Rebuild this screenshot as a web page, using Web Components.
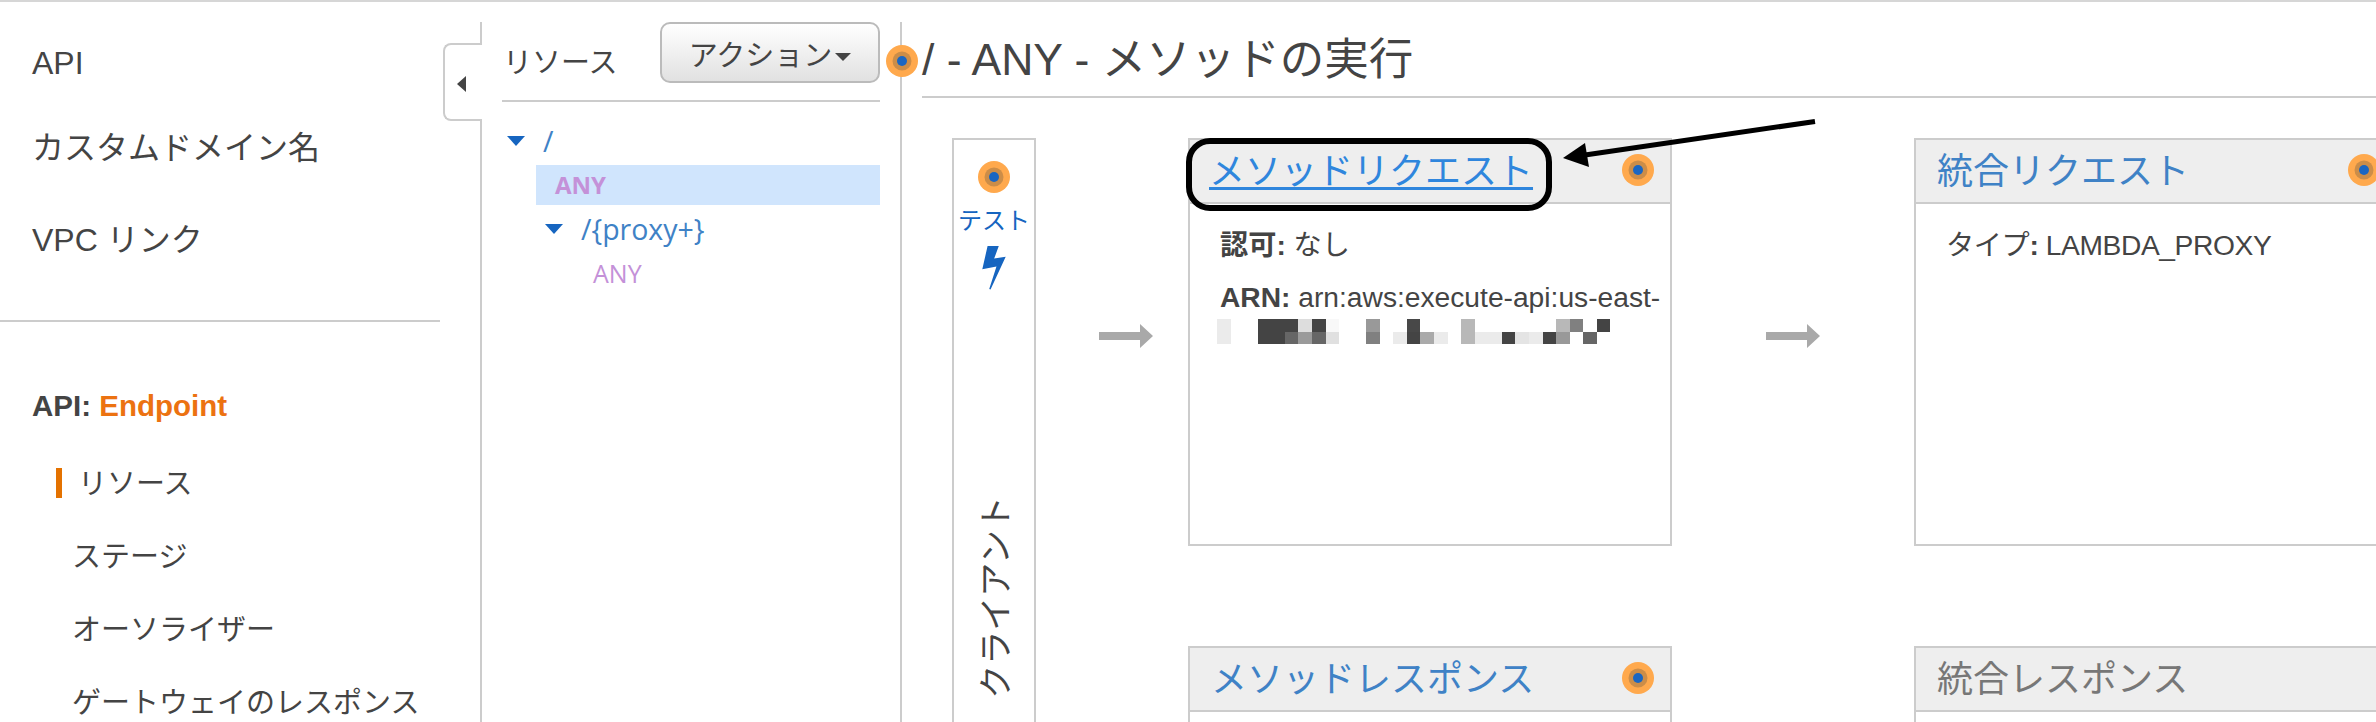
<!DOCTYPE html>
<html lang="ja">
<head>
<meta charset="utf-8">
<style>
  html, body { margin: 0; height: 722px; overflow: hidden; background: #fff; }
  body { font-family: "Liberation Sans", "Noto Sans CJK JP", sans-serif; color: #444; }
</style>
</head>
<body>
<console-shell>
  <api-sidebar slot="nav"></api-sidebar>
  <resource-panel slot="tree"></resource-panel>
  <method-execution slot="main">
    <client-box slot="client"></client-box>
    <flow-arrow slot="arrow1"></flow-arrow>
    <method-card slot="req" highlight pulse link heading="メソッドリクエスト">
      <p class="line"><b>認可:</b> なし</p>
      <p class="line arn"><b>ARN:</b> arn:aws:execute-api:us-east-</p>
      <pixel-block></pixel-block>
    </method-card>
    <flow-arrow slot="arrow2"></flow-arrow>
    <method-card slot="integ" pulse heading="統合リクエスト">
      <p class="line tight">タイプ<b>:</b> LAMBDA_PROXY</p>
    </method-card>
    <method-card slot="res" pulse heading="メソッドレスポンス"></method-card>
    <method-card slot="integres" muted heading="統合レスポンス"></method-card>
  </method-execution>
</console-shell>

<script>
const FONT = '"Liberation Sans", "Noto Sans CJK JP", sans-serif';

class PulseDot extends HTMLElement {
  constructor() {
    super();
    this.attachShadow({ mode: 'open' });
    this.shadowRoot.innerHTML = `
      <style>
        :host { display: block; width: 32px; height: 32px; }
        svg { display: block; }
      </style>
      <svg width="32" height="32" viewBox="0 0 32 32">
        <circle cx="16" cy="16" r="16" fill="#ffa94d"/>
        <circle cx="16" cy="16" r="9.5" fill="#cc8d48"/>
        <circle cx="16" cy="16" r="5" fill="#1a66c2"/>
      </svg>`;
  }
}
customElements.define('pulse-dot', PulseDot);

class ConsoleShell extends HTMLElement {
  constructor() {
    super();
    this.attachShadow({ mode: 'open' });
    this.shadowRoot.innerHTML = `
      <style>
        :host {
          display: flex;
          width: 2376px;
          height: 720px;
          border-top: 2px solid #d6d6d6;
          overflow: hidden;
        }
      </style>
      <slot name="nav"></slot>
      <slot name="tree"></slot>
      <slot name="main"></slot>`;
  }
}
customElements.define('console-shell', ConsoleShell);

class ApiSidebar extends HTMLElement {
  constructor() {
    super();
    this.attachShadow({ mode: 'open' });
    this.shadowRoot.innerHTML = `
      <style>
        :host {
          display: block;
          flex: none;
          width: 480px;
          font-size: 32px;
          color: #444;
        }
        .row { height: 40px; line-height: 40px; padding-left: 32px; white-space: nowrap; }
        hr { height: 2px; border: 0; margin: 60px 40px 0 0; background: #ccc; }
        .head { font-size: 29.5px; font-weight: 700; margin-top: 64px; }
        .head span { color: #ec7211; }
        .sub { font-size: 29px; padding-left: 72px; margin-top: 33px; }
        .sub.on { display: flex; align-items: center; padding-left: 56px; margin-top: 38px; }
        .sub.on i { width: 6px; height: 30px; background: #e47200; margin: -2px 16px 0 0; }
      </style>
      <div class="row" style="margin-top:41px">API</div>
      <div class="row" style="margin-top:45px">カスタムドメイン名</div>
      <div class="row" style="margin-top:52px">VPC リンク</div>
      <hr>
      <div class="row head">API: <span>Endpoint</span></div>
      <div class="row sub on"><i></i>リソース</div>
      <div class="row sub" style="margin-top:33px">ステージ</div>
      <div class="row sub">オーソライザー</div>
      <div class="row sub">ゲートウェイのレスポンス</div>`;
  }
}
customElements.define('api-sidebar', ApiSidebar);

class ResourcePanel extends HTMLElement {
  constructor() {
    super();
    this.attachShadow({ mode: 'open' });
    this.shadowRoot.innerHTML = `
      <style>
        :host {
          display: block;
          position: relative;
          flex: none;
          box-sizing: border-box;
          width: 422px;
          margin-top: 20px;
          padding: 0 20px;
          border-left: 2px solid #ccc;
          border-right: 2px solid #ccc;
          font-family: ${FONT};
        }
        .tab {
          position: absolute;
          left: -39px;
          top: 21px;
          box-sizing: border-box;
          width: 39px;
          height: 78px;
          background: #fff;
          border: 2px solid #ccc;
          border-right: 0;
          border-radius: 8px 0 0 8px;
        }
        .tab::before {
          content: "";
          position: absolute;
          right: -2px;
          top: 0;
          width: 2px;
          height: 74px;
          background: #fff;
        }
        .tab::after {
          content: "";
          position: absolute;
          left: 12px;
          top: 31px;
          border: 8px solid transparent;
          border-left: 0;
          border-right: 9px solid #444;
        }
        .head {
          display: flex;
          justify-content: space-between;
          height: 78px;
          border-bottom: 2px solid #ccc;
          font-size: 29px;
        }
        .head span { line-height: 82px; padding-left: 1px; }
        button {
          box-sizing: border-box;
          width: 220px;
          height: 61px;
          padding: 0;
          border: 2px solid #bbb;
          border-radius: 10px;
          background: linear-gradient(#fff, #e1e1e1);
          font: 29px ${FONT};
          color: #444;
          white-space: nowrap;
        }
        button i {
          display: inline-block;
          margin-left: 3px;
          vertical-align: 5px;
          border: 8px solid transparent;
          border-top: 8px solid #444;
          border-bottom: 0;
        }
        pulse-dot { position: absolute; right: -18px; top: 23px; }
        .tree { margin-top: 15px; font-family: "Open Sans", "Noto Sans CJK JP", sans-serif; }
        .node { display: flex; align-items: center; height: 48px; color: #3f82c6; font-size: 28.5px; }
        .node i {
          flex: none;
          width: 0;
          height: 0;
          margin: 0 18px 0 5px;
          border-left: 9px solid transparent;
          border-right: 9px solid transparent;
          border-top: 10px solid #1665c0;
        }
        .node.two { margin-left: 38px; }
        .verb { color: #c491d8; }
        .sel {
          margin: 0 0 0 34px;
          padding-left: 19px;
          height: 40px;
          line-height: 40px;
          background: #d0e5fd;
          font-size: 24px;
          font-weight: 700;
        }
        .leaf { margin-left: 91px; height: 40px; line-height: 40px; font-size: 25px; }
      </style>
      <div class="tab"></div>
      <div class="head"><span>リソース</span><button>アクション<i></i></button></div>
      <pulse-dot></pulse-dot>
      <div class="tree">
        <div class="node"><i></i>/</div>
        <div class="verb sel">ANY</div>
        <div class="node two"><i></i>/{proxy+}</div>
        <div class="verb leaf">ANY</div>
      </div>`;
  }
}
customElements.define('resource-panel', ResourcePanel);

class MethodExecution extends HTMLElement {
  constructor() {
    super();
    this.attachShadow({ mode: 'open' });
    this.shadowRoot.innerHTML = `
      <style>
        :host {
          display: block;
          position: relative;
          flex: 1;
          min-width: 0;
          padding-left: 20px;
        }
        h1 {
          margin: 0;
          height: 94px;
          border-bottom: 2px solid #ccc;
          font-size: 44.5px;
          font-weight: 400;
          line-height: 116px;
          white-space: nowrap;
          color: #444;
        }
        .grid {
          display: grid;
          grid-template-columns: 84px 152px 484px 242px 484px;
          grid-template-rows: 408px 408px;
          row-gap: 100px;
          margin: 40px 0 0 30px;
        }
        ::slotted([slot="client"]) { grid-column: 1; grid-row: 1 / 3; }
        ::slotted([slot="arrow1"]) { grid-column: 2; grid-row: 1; padding-left: 28px; }
        ::slotted([slot="req"]) { grid-column: 3; grid-row: 1; }
        ::slotted([slot="arrow2"]) { grid-column: 4; grid-row: 1; }
        ::slotted([slot="integ"]) { grid-column: 5; grid-row: 1; }
        ::slotted([slot="res"]) { grid-column: 3; grid-row: 2; }
        ::slotted([slot="integres"]) { grid-column: 5; grid-row: 2; }
        .note { position: absolute; left: 0; top: 0; pointer-events: none; }
      </style>
      <h1>/ - ANY - メソッドの実行</h1>
      <div class="grid">
        <slot name="client"></slot>
        <slot name="arrow1"></slot>
        <slot name="req"></slot>
        <slot name="arrow2"></slot>
        <slot name="integ"></slot>
        <slot name="res"></slot>
        <slot name="integres"></slot>
      </div>
      <svg class="note" width="1000" height="200" viewBox="902 2 1000 200">
        <line x1="1815" y1="121.5" x2="1585" y2="155" stroke="#000" stroke-width="5"/>
        <polygon points="1563,158 1585,143 1589,167" fill="#000"/>
      </svg>`;
  }
}
customElements.define('method-execution', MethodExecution);

class ClientBox extends HTMLElement {
  constructor() {
    super();
    this.attachShadow({ mode: 'open' });
    this.shadowRoot.innerHTML = `
      <style>
        :host {
          display: flex;
          flex-direction: column;
          align-items: center;
          box-sizing: border-box;
          height: 640px;
          padding-top: 21px;
          border: 2px solid #ccc;
        }
        .test { margin-top: 10px; font-size: 24px; line-height: 36px; color: #1665c0; }
        svg { display: block; margin-top: 5px; }
        .name {
          margin: 205px 0 0 4px;
          writing-mode: vertical-rl;
          text-orientation: sideways;
          transform: rotate(180deg);
          font-size: 34px;
          line-height: 40px;
          color: #444;
        }
      </style>
      <pulse-dot></pulse-dot>
      <div class="test">テスト</div>
      <svg width="28" height="47" viewBox="120 315 85 140">
        <polygon points="143,320 177,320 163,358 198,352 152,452 148,450 170,382 127,390" fill="#1665c0"/>
      </svg>
      <div class="name">クライアント</div>`;
  }
}
customElements.define('client-box', ClientBox);

class FlowArrow extends HTMLElement {
  constructor() {
    super();
    this.attachShadow({ mode: 'open' });
    this.shadowRoot.innerHTML = `
      <style>
        :host { display: flex; justify-content: center; align-items: flex-start; padding-top: 186px; }
        svg { display: block; }
      </style>
      <svg width="54" height="24" viewBox="0 0 54 24">
        <polygon points="0,8 41,8 41,0 54,12 41,24 41,16 0,16" fill="#a9a9a9"/>
      </svg>`;
  }
}
customElements.define('flow-arrow', FlowArrow);

class MethodCard extends HTMLElement {
  constructor() {
    super();
    this.attachShadow({ mode: 'open' });
    const heading = this.getAttribute('heading') || '';
    const dot = this.hasAttribute('pulse') ? '<pulse-dot></pulse-dot>' : '';
    const mark = this.hasAttribute('highlight') ? '<div class="mark"></div>' : '';
    const title = this.hasAttribute('link') ? `<a>${heading}</a>` : `<span>${heading}</span>`;
    this.shadowRoot.innerHTML = `
      <style>
        :host {
          display: block;
          position: relative;
          box-sizing: border-box;
          border: 2px solid #ccc;
          font-size: 28.2px;
          color: #444;
        }
        header {
          display: flex;
          justify-content: space-between;
          align-items: center;
          box-sizing: border-box;
          height: 64px;
          padding: 0 16px 2px 21px;
          background: #eee;
          border-bottom: 2px solid #ccc;
          font-size: 36px;
          white-space: nowrap;
          color: #3f82c6;
        }
        header a, header span { margin-bottom: 5px; }
        :host([muted]) header { color: #777; }
        a { margin-left: -2px; color: #2f86dd; text-decoration: underline; text-decoration-thickness: 3px; text-underline-offset: 3px; }
        .mark {
          position: absolute;
          left: -4px;
          top: -2px;
          box-sizing: border-box;
          width: 366px;
          height: 73px;
          border: 6px solid #000;
          border-radius: 24px;
        }
        .body { padding: 21px 0 0 30px; }
        ::slotted(.line) { margin: 0; height: 40px; line-height: 40px; white-space: nowrap; }
        ::slotted(.arn) { margin-top: 12px; }
        ::slotted(.tight) { letter-spacing: -0.4px; }
      </style>
      <header>${title}${dot}</header>
      ${mark}
      <div class="body"><slot></slot></div>`;
  }
}
customElements.define('method-card', MethodCard);

// the redacted part of the ARN, column by column: [top, bottom]
const PIXELS = [
  ['#ebebeb', '#ebebeb'], null, null,
  ['#444', '#444'], ['#444', '#444'], ['#444', '#666'], ['#ddd', '#9a9a9a'], ['#444', '#666'], ['#f8f8f8', '#e0e0e0'],
  null, null,
  ['#999', '#808080'], null,
  [null, '#ebebeb'], ['#484848', '#444'], [null, '#aaa'], [null, '#ebebeb'], null,
  ['#b8b8b8', '#b8b8b8'], [null, '#ebebeb'], [null, '#ebebeb'], [null, '#444'], [null, '#e4e4e4'], [null, '#ebebeb'],
  [null, '#444'], ['#b8b8b8', '#999'], ['#808080', null], [null, '#666'], ['#444', null]
];

class PixelBlock extends HTMLElement {
  constructor() {
    super();
    this.attachShadow({ mode: 'open' });
    const cells = PIXELS.map(col => {
      const [top, bottom] = col || [null, null];
      return `<i style="background:${top || 'transparent'}"></i><i style="background:${bottom || 'transparent'}"></i>`;
    }).join('');
    this.shadowRoot.innerHTML = `
      <style>
        :host {
          display: grid;
          grid-auto-flow: column;
          grid-template-rows: 12.5px 12.5px;
          grid-auto-columns: 13.57px;
          margin: 2px 0 0 -3px;
        }
      </style>
      ${cells}`;
  }
}
customElements.define('pixel-block', PixelBlock);
</script>
</body>
</html>
